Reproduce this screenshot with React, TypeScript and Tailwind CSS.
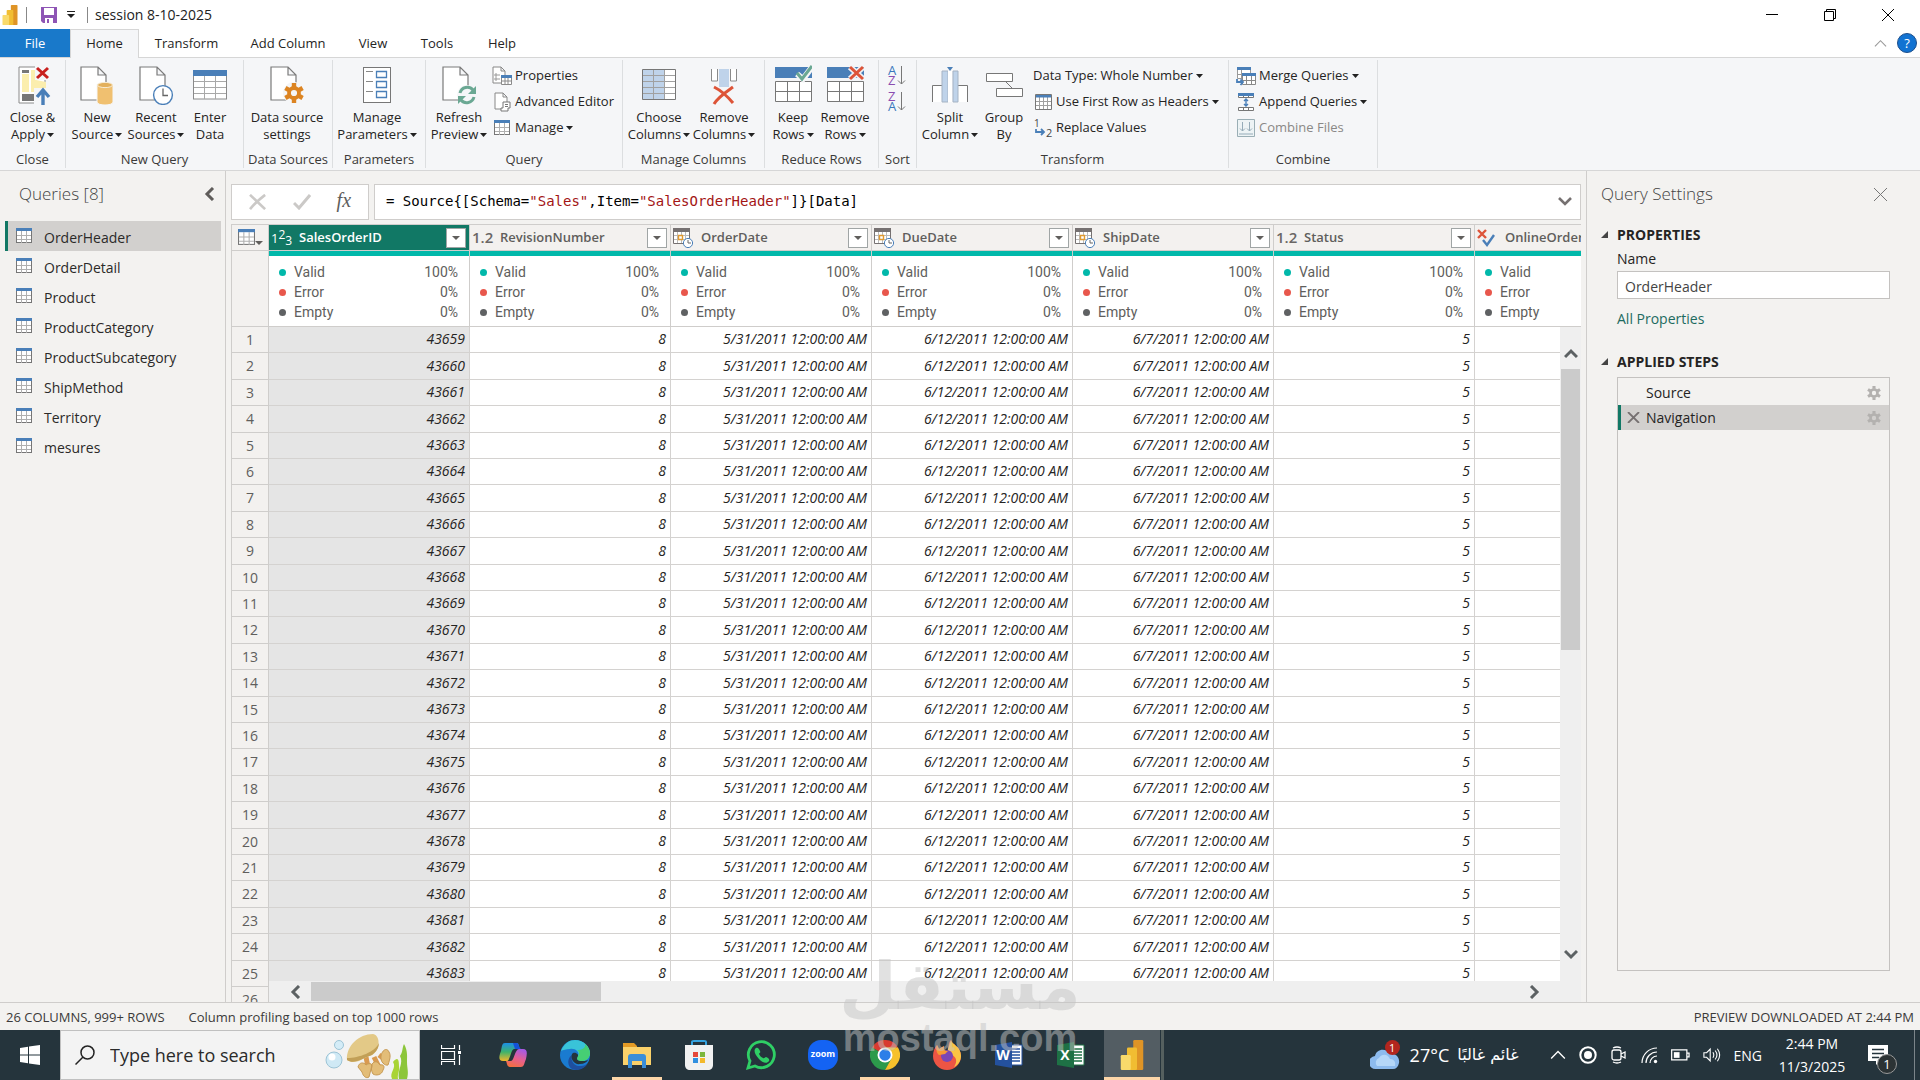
import { useState } from "react";
import type { ReactNode } from "react";

const queries = [
  "OrderHeader",
  "OrderDetail",
  "Product",
  "ProductCategory",
  "ProductSubcategory",
  "ShipMethod",
  "Territory",
  "mesures",
];

const columns = [
  { name: "SalesOrderID", type: "int" },
  { name: "RevisionNumber", type: "decimal" },
  { name: "OrderDate", type: "date" },
  { name: "DueDate", type: "date" },
  { name: "ShipDate", type: "date" },
  { name: "Status", type: "decimal" },
  { name: "OnlineOrderFlag", type: "bool" },
];

const rows = Array.from({ length: 26 }, (_, i) => [
  String(43659 + i),
  "8",
  "5/31/2011 12:00:00 AM",
  "6/12/2011 12:00:00 AM",
  "6/7/2011 12:00:00 AM",
  "5",
  "",
]);

/* ---------- icons ---------- */

const Caret = () => (
  <svg width="7" height="4" viewBox="0 0 7 4" className="inline-block shrink-0">
    <path d="M0 0h7L3.5 4z" fill="#222" />
  </svg>
);

const Page = () => (
  <path d="M2 2h17l8 8v25H2zM19 2v8h8" fill="#fff" stroke="#7a7a7a" strokeWidth="1.2" />
);

const TableIcon = ({ size = 16 }: { size?: number }) => (
  <svg width={size} height={size} viewBox="0 0 16 16" className="shrink-0">
    <rect x="0.5" y="0.5" width="15" height="14" fill="#fff" stroke="#767676" />
    <path d="M5.5 3v12M10.5 3v12M1 7.5h14M1 11.5h14" stroke="#b0b0b0" fill="none" />
    <path d="M0 0h16v3H0z" fill="#4a7fb8" />
  </svg>
);

const Gear = ({ fill }: { fill: string }) => (
  <g fill="none" stroke={fill}>
    <circle cx="10" cy="10" r="5" strokeWidth="3.8" />
    <g strokeWidth="4.4">
      <path d="M10 0v4M10 16v4M1.4 5l3.4 2M15.2 13l3.4 2M1.4 15l3.4-2M15.2 7l3.4-2" />
    </g>
  </g>
);

const CloseApplyIcon = () => (
  <svg width="36" height="40" viewBox="0 0 36 40">
    <path d="M4 2h26v36H4z" fill="#fff" stroke="#8a8a8a" />
    <path d="M7 9h7v18H7zM16 5h5v10l10 2v10H16z" fill="#fbeeae" />
    <path d="M7 5h7v3H7zM7 29h13v7H7z" fill="#777" />
    <path d="M20 0h16v15H20zM19 23h17v17H19z" fill="#f5f6f8" />
    <path d="M22 3l11 10M33 3L22 13" stroke="#c8201e" strokeWidth="3" />
    <path d="M28 40V26M22 32l6-7 6 7" stroke="#4a7fb8" strokeWidth="3.4" fill="none" />
  </svg>
);

const NewSourceIcon = () => (
  <svg width="36" height="40" viewBox="0 0 36 40">
    <Page />
    <path d="M18 19v18c0 4 16 4 16 0V19z" fill="#f0c070" stroke="#f5f6f8" />
    <ellipse cx="26" cy="20" rx="7.5" ry="2.6" fill="#e3b05c" stroke="#f8ecd4" />
  </svg>
);

const RecentIcon = () => (
  <svg width="36" height="40" viewBox="0 0 36 40">
    <Page />
    <circle cx="25" cy="30" r="9.4" fill="#fff" stroke="#4a7fb8" strokeWidth="1.4" />
    <path d="M25 23.500v7h5" stroke="#666" fill="none" strokeWidth="1.3" />
  </svg>
);

const EnterDataIcon = () => (
  <svg width="36" height="40" viewBox="0 0 36 40">
    <rect x="1.500" y="6" width="33" height="28" fill="#fff" stroke="#8a8a8a" />
    <path d="M12.500 10v24M23.500 10v24M2 16.500h32M2 22.500h32M2 28.500h32" stroke="#a8a8a8" />
    <path d="M1 5h34v6H1z" fill="#4a7fb8" />
  </svg>
);

const DataSettingsIcon = () => (
  <svg width="36" height="40" viewBox="0 0 36 40">
    <Page />
    <circle cx="25" cy="28" r="11" fill="#f5f6f8" />
    <g transform="translate(15 18)">
      <Gear fill="#dc8422" />
    </g>
  </svg>
);

const ParamsIcon = () => (
  <svg width="36" height="40" viewBox="0 0 36 40">
    <rect x="4.500" y="2.500" width="27" height="35" fill="#fff" stroke="#777" />
    <path d="M7 6.500h7M7 16.500h7M7 26.500h7" stroke="#888" />
    <path d="M17.500 6.500h10v6h-10zM17.500 16.500h10v6h-10zM17.500 26.500h10v6h-10z" fill="#fff" stroke="#4a7fb8" strokeWidth="1.3" />
  </svg>
);

const RefreshIcon = () => (
  <svg width="36" height="40" viewBox="0 0 36 40">
    <Page />
    <circle cx="26" cy="30" r="10" fill="#f5f6f8" />
    <path d="M19 28a7.500 7.500 0 0 1 13-3M33 32a7.500 7.500 0 0 1-13 3" fill="none" stroke="#6aa893" strokeWidth="3" />
    <path d="M35 21v8h-8zM17 39v-8h8z" fill="#6aa893" />
  </svg>
);

const ChooseColumnsIcon = () => (
  <svg width="36" height="40" viewBox="0 0 36 40">
    <path d="M1.500 4.500h33v30h-33z" fill="#fff" />
    <path d="M1.500 4.500h22v30h-22z" fill="#bfd3ea" />
    <path d="M12.500 5v29M23.500 5v29M2 10.500h32M2 16.500h32M2 22.500h32M2 28.500h32" stroke="#a0a0a0" />
    <path d="M1.500 4.500h33v30h-33z" fill="none" stroke="#777" />
  </svg>
);

const RemoveColumnsIcon = () => (
  <svg width="36" height="40" viewBox="0 0 36 40">
    <path d="M5.500 4v12h6V4M24.500 4v12h6V4" fill="#fff" stroke="#8a8a8a" />
    <path d="M13 4h10v18H13z" fill="#bfd3ea" />
    <path d="M8 22c6 3 14 10 19 16M27 22C20 27 12 32 8 39" stroke="#dd5438" strokeWidth="3" fill="none" />
  </svg>
);

const RowsIcon = ({ keep }: { keep: boolean }) => (
  <svg width="38" height="40" viewBox="0 0 38 40">
    <path d="M1 2h37v11H1z" fill="#4a7fb8" />
    <path d="M1.500 16.500h36v20h-36zM13.500 17v20M25.500 17v20M2 26.500h36" fill="#fff" stroke="#777" />
    {keep ? (
      <>
        <path d="M23 9l6 5L38 2" stroke="#f5f6f8" strokeWidth="6" fill="none" />
        <path d="M23 8l5 6L38 1" stroke="#6aa893" strokeWidth="3" fill="none" />
      </>
    ) : (
      <>
        <path d="M24 2l13 12M37 2L24 14" stroke="#f0f2f5" strokeWidth="6" />
        <path d="M24 2l13 12M37 2L24 14" stroke="#dd5438" strokeWidth="3" />
      </>
    )}
  </svg>
);

const SplitIcon = () => (
  <svg width="38" height="40" viewBox="0 0 38 40">
    <path d="M1.500 37V20.500h11V37M25.500 37V20.500h11V37" fill="#fff" stroke="#777" />
    <path d="M11 6h6v31h-6zM22 6h5v31h-5z" fill="#bfd3ea" stroke="#a5b3c4" />
    <path d="M17 6h4v31h-4z" fill="#fff" />
    <path d="M16 2h6l-3 4z" fill="#4a7fb8" />
  </svg>
);

const GroupByIcon = () => (
  <svg width="38" height="40" viewBox="0 0 38 40">
    <path d="M20 16l8 8" stroke="#777" />
    <path d="M1.500 8.500h26v8h-26zM11.500 23.500h26v8h-26z" fill="#fff" stroke="#777" />
  </svg>
);

const SortIcon = ({ a, b }: { a: string; b: string }) => (
  <svg width="20" height="22" viewBox="0 0 20 22" className="overflow-visible">
    <text x="0" y="10" fontSize="13" fontFamily="Open Sans, sans-serif" fill={a === "A" ? "#3a78bd" : "#8a4cb0"}>{a}</text>
    <text x="0" y="20" fontSize="13" fontFamily="Open Sans, sans-serif" fill={b === "A" ? "#3a78bd" : "#8a4cb0"}>{b}</text>
    <path d="M13.500 1v18M10 15.500l3.500 3.500 3.500-3.500" stroke="#777" fill="none" />
  </svg>
);

const PropertiesIcon = () => (
  <svg width="20" height="20" viewBox="0 0 20 20">
    <path d="M1 1h8l4 4v12H1zM9 1v4h4" fill="#fff" stroke="#888" />
    <path d="M3 8h2v2H3zM3 12h2v2H3zM6 9h2M6 13h2" stroke="#999" fill="none" />
    <path d="M9.500 9.500h10v9h-10zM13 12v6M16 12v6M10 15h9" fill="#fff" stroke="#8a8a8a" />
    <path d="M9 9h11v3H9z" fill="#4a7fb8" />
  </svg>
);

const EditorIcon = () => (
  <svg width="20" height="20" viewBox="0 0 20 20">
    <path d="M3 1h8l4 4v12H3zM11 1v4h4" fill="#fff" stroke="#888" />
    <path d="M11 10h7v6h-2v3H9v-3h2z" fill="#fff" stroke="#777" />
    <path d="M13 12.500h3M13 14.500h3" stroke="#777" />
  </svg>
);

const HeadersIcon = () => (
  <svg width="17" height="16" viewBox="0 0 17 16">
    <path d="M.5 .5h16v15H.5z" fill="#fff" />
    <path d="M4.500 1v14M8.500 1v14M12.500 1v14M1 7.500h15M1 11.500h15" stroke="#a0a0a0" />
    <path d="M1 1h15v2.500H1z" fill="#4a7fb8" />
    <path d="M.5 .5h16v15H.5z" fill="none" stroke="#777" />
  </svg>
);

const ReplaceIcon = () => (
  <svg width="19" height="20" viewBox="0 0 19 20" className="overflow-visible">
    <text x="0" y="9" fontSize="10" fontFamily="Open Sans, sans-serif" fill="#444">1</text>
    <text x="12" y="19" fontSize="11" fontFamily="Open Sans, sans-serif" fill="#444">2</text>
    <path d="M2 11v3h7M7 11l3 3-3 3" stroke="#4a7fb8" strokeWidth="1.800" fill="none" />
  </svg>
);

const MergeIcon = () => (
  <svg width="20" height="20" viewBox="0 0 20 20">
    <path d="M1.500 1.500h13v11h-13zM5.500 3v10M2 8.500h8" fill="#fff" stroke="#999" />
    <path d="M1 1h14v3H1z" fill="#4a7fb8" />
    <path d="M6.500 7.500h13v11h-13zM10.500 9v10M15.500 9v10M7 14.500h12" fill="#fff" stroke="#888" />
    <path d="M6 7h14v3H6z" fill="#4a7fb8" />
    <path d="M1 13v3h5M4.500 13.500L7 16l-2.500 3" stroke="#4a7fb8" strokeWidth="1.800" fill="none" />
  </svg>
);

const AppendIcon = () => (
  <svg width="20" height="20" viewBox="0 0 20 20">
    <path d="M2.500 3.500h15v2h-15zM7.500 3v3M12.500 3v3M2.500 15.500h15v3h-15zM7.500 15v3M12.500 15v3" fill="#fff" stroke="#777" />
    <path d="M2 1h16v3H2z" fill="#4a7fb8" />
    <path d="M10 7v7M8 9l2-2 2 2M8 12l2 2 2-2" stroke="#4a7fb8" fill="none" strokeWidth="1.400" />
  </svg>
);

const CombineIcon = () => (
  <svg width="20" height="20" viewBox="0 0 20 20">
    <path d="M1.500 1.500h17v17h-17z" fill="#edf3f5" stroke="#9aaeb5" />
    <path d="M6.500 4v9M4 10.500L6.500 13 9 10.500M13.500 4v9M11 10.500l2.500 2.500 2.500-2.500M3 16h14" stroke="#95abb8" fill="none" />
  </svg>
);

const PowerBi = ({ size }: { size: number }) => (
  <svg width={size} height={size} viewBox="0 0 24 24" className="shrink-0">
    <rect x="13" y="0" width="8" height="24" rx="1" fill="#df9426" />
    <rect x="8" y="6" width="8" height="18" rx="1" fill="#f1bd32" />
    <rect x="3" y="12" width="8" height="12" rx="1" fill="#f9da6b" />
  </svg>
);

const Chevron = ({ d, size = 14, color = "#5f5c5a", w = 3 }: { d: string; size?: number; color?: string; w?: number }) => (
  <svg width={size} height={size} viewBox="0 0 14 14" className="shrink-0">
    <path d={d} stroke={color} strokeWidth={w} fill="none" />
  </svg>
);

const UP = "M1 10l6-6 6 6";
const DOWN = "M1 4l6 6 6-6";
const LEFT = "M10 1L4 7l6 6";
const RIGHT = "M4 1l6 6-6 6";

const TypeIcon = ({ type }: { type: string }) => {
  if (type === "int") {
    return (
      <span className="flex text-[13px] leading-4 font-normal text-white">
        1<sup className="top-[-3px] text-[12px] leading-4">2</sup>
        <sub className="bottom-[-3px] text-[12px] leading-4">3</sub>
      </span>
    );
  }
  if (type === "decimal") {
    return <span className="text-[15px] font-semibold text-[#6a6765]">1.2</span>;
  }
  if (type === "date") {
    return (
      <svg width="20" height="22" viewBox="0 0 20 22">
        <path d="M.5 1.500h16v15H.5z" fill="#fff" stroke="#767171" />
        <path d="M4.500 4v12M8.500 4v12M12.500 4v12M1 8.500h15M1 12.500h15" stroke="#bbb" />
        <path d="M0 1h17v4H0z" fill="#767171" />
        <path d="M5.500 8.500h4v4h-4z" fill="#fff" stroke="#e09a30" strokeWidth="1.400" />
        <circle cx="15" cy="16" r="4.600" fill="#fff" stroke="#4a7fb8" />
        <path d="M15 13v3h3" stroke="#666" fill="none" />
      </svg>
    );
  }
  return (
    <svg width="18" height="20" viewBox="0 0 18 20">
      <path d="M1 2l8 8M9 2L1 10" stroke="#dd5438" strokeWidth="2.400" />
      <path d="M6 12l4 5 7-10" stroke="#4a7fb8" strokeWidth="2.400" fill="none" />
    </svg>
  );
};

/* ---------- ribbon ---------- */

const Big = ({ icon, lines, caret, width }: { icon: ReactNode; lines: [string, string]; caret?: boolean; width: string }) => (
  <button className={"flex flex-col items-center whitespace-nowrap text-[13px] leading-[17px] " + width}>
    {icon}
    <span className="mt-1">{lines[0]}</span>
    <span className="flex items-center gap-[2px]">
      {lines[1]}
      {caret && <Caret />}
    </span>
  </button>
);

const Small = ({ icon, label, caret, disabled }: { icon?: ReactNode; label: string; caret?: boolean; disabled?: boolean }) => (
  <button disabled={disabled} className="flex h-[26px] items-center gap-[3px] whitespace-nowrap text-[13px] disabled:text-[#8a8886]">
    {icon && <span className="flex w-5 justify-center">{icon}</span>}
    {label}
    {caret && <Caret />}
  </button>
);

const Group = ({ label, width, children }: { label: string; width: string; children: ReactNode }) => (
  <div className={"flex h-[108px] shrink-0 flex-col border-r border-[#dcdee0] " + width}>
    <div className="flex flex-1">{children}</div>
    <div className="h-[18px] text-center text-[13px] leading-[18px] whitespace-nowrap text-[#3b3a39]">{label}</div>
  </div>
);

const Ribbon = () => (
  <div className="flex h-[113px] border-b border-[#d6d6d6] bg-[#f5f6f8] pt-[2px]">
    <Group label="Close" width="w-[66px]">
      <div className="flex pt-[5px]">
        <Big icon={<CloseApplyIcon />} lines={["Close &", "Apply"]} caret width="w-[65px]" />
      </div>
    </Group>
    <Group label="New Query" width="w-[178px]">
      <div className="flex pt-[5px]">
        <Big icon={<NewSourceIcon />} lines={["New", "Source"]} caret width="w-[62px]" />
        <Big icon={<RecentIcon />} lines={["Recent", "Sources"]} caret width="w-14" />
        <Big icon={<EnterDataIcon />} lines={["Enter", "Data"]} width="w-[52px]" />
      </div>
    </Group>
    <Group label="Data Sources" width="w-[89px]">
      <div className="flex pt-[5px]">
        <Big icon={<DataSettingsIcon />} lines={["Data source", "settings"]} width="w-[86px]" />
      </div>
    </Group>
    <Group label="Parameters" width="w-[93px]">
      <div className="flex pt-[5px]">
        <Big icon={<ParamsIcon />} lines={["Manage", "Parameters"]} caret width="w-[88px]" />
      </div>
    </Group>
    <Group label="Query" width="w-[197px]">
      <div className="flex pt-[5px]">
        <Big icon={<RefreshIcon />} lines={["Refresh", "Preview"]} caret width="w-[66px]" />
      </div>
      <div className="flex flex-col items-start pt-[3px]">
        <Small icon={<PropertiesIcon />} label="Properties" />
        <Small icon={<EditorIcon />} label="Advanced Editor" />
        <Small icon={<TableIcon />} label="Manage" caret />
      </div>
    </Group>
    <Group label="Manage Columns" width="w-[142px]">
      <div className="flex pt-[5px] pl-[3px]">
        <Big icon={<ChooseColumnsIcon />} lines={["Choose", "Columns"]} caret width="w-[66px]" />
        <Big icon={<RemoveColumnsIcon />} lines={["Remove", "Columns"]} caret width="w-16" />
      </div>
    </Group>
    <Group label="Reduce Rows" width="w-[114px]">
      <div className="flex pt-[5px] pl-[2px]">
        <Big icon={<RowsIcon keep />} lines={["Keep", "Rows"]} caret width="w-[52px]" />
        <Big icon={<RowsIcon keep={false} />} lines={["Remove", "Rows"]} caret width="w-[52px]" />
      </div>
    </Group>
    <Group label="Sort" width="w-[38px]">
      <div className="flex flex-col gap-1 pt-[5px] pl-[9px]">
        <button aria-label="Sort ascending"><SortIcon a="A" b="Z" /></button>
        <button aria-label="Sort descending"><SortIcon a="Z" b="A" /></button>
      </div>
    </Group>
    <Group label="Transform" width="w-[312px]">
      <div className="flex pt-[5px] pl-[2px]">
        <Big icon={<SplitIcon />} lines={["Split", "Column"]} caret width="w-[62px]" />
        <Big icon={<GroupByIcon />} lines={["Group", "By"]} width="w-[46px]" />
      </div>
      <div className="flex flex-col items-start pt-[3px] pl-[6px]">
        <Small label="Data Type: Whole Number" caret />
        <Small icon={<HeadersIcon />} label="Use First Row as Headers" caret />
        <Small icon={<ReplaceIcon />} label="Replace Values" />
      </div>
    </Group>
    <Group label="Combine" width="w-[149px]">
      <div className="flex flex-col items-start pt-[3px] pl-[7px]">
        <Small icon={<MergeIcon />} label="Merge Queries" caret />
        <Small icon={<AppendIcon />} label="Append Queries" caret />
        <Small icon={<CombineIcon />} label="Combine Files" disabled />
      </div>
    </Group>
  </div>
);

const TitleBar = () => (
  <div className="flex h-[29px] items-center pr-[26px]">
    <PowerBi size={20} />
    <span className="ml-[6px] h-4 w-px bg-[#888]" />
    <button aria-label="Save" className="ml-[14px]">
      <svg width="16" height="16" viewBox="0 0 16 16">
        <path d="M0 0h16v16H2l-2-2z" fill="#8e55b5" />
        <path d="M3 1h10v7H3zM4 11h8v5H4z" fill="#fff" />
        <path d="M6 12h2v4H6z" fill="#8e55b5" />
      </svg>
    </button>
    <button aria-label="Customize toolbar" className="ml-[10px]">
      <svg width="8" height="7" viewBox="0 0 8 7">
        <path d="M0 0h8v1H0zM0 3h8L4 7z" fill="#222" />
      </svg>
    </button>
    <span className="ml-3 h-4 w-px bg-[#888]" />
    <h1 className="ml-[7px] text-[14px] text-[#222]">session 8-10-2025</h1>
    <div className="ml-auto flex items-center gap-[46px]">
      <button aria-label="Minimize">
        <svg width="12" height="12" viewBox="0 0 12 12"><path d="M0 5.500h12" stroke="#000" /></svg>
      </button>
      <button aria-label="Restore">
        <svg width="12" height="12" viewBox="0 0 12 12"><path d="M.5 2.500h9v9h-9zM2.500 2V.5h9v9H10" stroke="#000" fill="none" /></svg>
      </button>
      <button aria-label="Close">
        <svg width="12" height="12" viewBox="0 0 12 12"><path d="M0 0l12 12M12 0L0 12" stroke="#000" /></svg>
      </button>
    </div>
  </div>
);

const Tabs = () => (
  <div className="flex h-[29px] border-b border-[#d6d6d6] text-[13px]">
    <button className="h-7 w-[70px] bg-[#1979ca] pt-[2px] text-white">File</button>
    <button className="h-[29px] w-[69px] border border-b-0 border-[#d6d6d6] bg-[#f5f6f8]">Home</button>
    <button className="w-[95px] pt-[2px]">Transform</button>
    <button className="w-[108px] pt-[2px]">Add Column</button>
    <button className="w-[62px] pt-[2px]">View</button>
    <button className="w-[66px] pt-[2px]">Tools</button>
    <button className="w-16 pt-[2px]">Help</button>
    <div className="ml-auto flex items-center gap-[10px] pr-[3px]">
      <button aria-label="Collapse ribbon"><Chevron d={UP} size={13} color="#999" w={1.2} /></button>
      <button aria-label="Help" className="h-5 w-5 rounded-full border border-[#1d4f8c] bg-[#1273d2] text-[13px] leading-[18px] text-white">?</button>
    </div>
  </div>
);

/* ---------- body ---------- */

const QueriesPanel = ({ active, onSelect }: { active: string; onSelect: (q: string) => void }) => (
  <aside className="w-[226px] shrink-0 border-r border-[#cfcdcb]">
    <div className="flex h-[50px] items-center justify-between pr-2 pb-1 pl-[19px]">
      <h2 className="text-[17px] font-light text-[#444]">Queries [8]</h2>
      <button aria-label="Collapse queries"><Chevron d={LEFT} /></button>
    </div>
    <ul className="pr-1 pl-[5px]">
      {queries.map((q) => (
        <li key={q}>
          <button
            onClick={() => onSelect(q)}
            className={
              "flex h-[30px] w-full items-center gap-3 border-l-[3px] pl-2 text-[14px] text-[#2b2a29] " +
              (q === active ? "border-[#117865] bg-[#d2d0ce]" : "border-transparent")
            }
          >
            <TableIcon />
            <span className="pt-[2px]">{q}</span>
          </button>
        </li>
      ))}
    </ul>
  </aside>
);

const Stat = ({ dot, label, value }: { dot: string; label: string; value: string }) => (
  <div className="flex h-5 items-center pr-[11px] pl-[10px] font-['Roboto',sans-serif] text-[14px] font-normal text-[#605e5c]">
    <span className={"mr-2 h-[7px] w-[7px] rounded-full " + dot} />
    {label}
    <span className="ml-auto">{value}</span>
  </div>
);

const DataGrid = () => (
  <div className="relative min-h-0 flex-1 overflow-hidden border-t border-l border-[#cfcdcb]">
    <table className="w-[1444px] table-fixed border-separate border-spacing-0">
      <colgroup>
        <col className="w-[37px]" />
        {columns.map((c) => (
          <col key={c.name} className="w-[201px]" />
        ))}
      </colgroup>
      <thead>
        <tr className="h-[26px]">
          <th className="border-r border-b border-[#cfcdcb] bg-[#f3f1ef] p-0">
            <button aria-label="Table menu" className="flex items-end pl-[6px]">
              <TableIcon size={17} />
              <svg width="8" height="5" viewBox="0 0 8 5"><path d="M0 0h8L4 4z" fill="#605e5c" /></svg>
            </button>
          </th>
          {columns.map((c, i) => (
            <th
              key={c.name}
              className={
                "overflow-hidden border-r border-b border-[#cfcdcb] p-0 " +
                (i === 0 ? "bg-[#117865] text-white" : "bg-[#f3f1ef] text-[#605e5c]")
              }
            >
              <div className="flex h-[25px] items-center pr-[3px] pl-[2px]">
                <span className="flex w-7 shrink-0">
                  <TypeIcon type={c.type} />
                </span>
                <span className="text-[13px] font-semibold">{c.name}</span>
                <button aria-label={"Filter " + c.name} className="ml-auto flex h-5 w-5 shrink-0 items-center justify-center border border-[#a0a5a5] bg-white">
                  <svg width="8" height="4" viewBox="0 0 8 4"><path d="M0 0h8L4 4z" fill="#605e5c" /></svg>
                </button>
              </div>
            </th>
          ))}
        </tr>
        <tr className="h-[76px]">
          <th className="border-r border-b border-[#cfcdcb] bg-[#f3f1ef] p-0" />
          {columns.map((c) => (
            <th key={c.name} className="border-r border-b border-[#cfcdcb] bg-white p-0 align-top">
              <div className="h-[5px] bg-[#01b8aa]" />
              <div className="pt-[6px]">
                <Stat dot="bg-[#01b8aa]" label="Valid" value="100%" />
                <Stat dot="bg-[#e8574c]" label="Error" value="0%" />
                <Stat dot="bg-[#5f6163]" label="Empty" value="0%" />
              </div>
            </th>
          ))}
        </tr>
      </thead>
      <tbody>
        {rows.map((row, i) => (
          <tr key={row[0]} className={i % 5 === 1 || i % 5 === 3 ? "h-[27px]" : "h-[26px]"}>
            <th className="border-r border-b border-[#cfcdcb] bg-[#f3f1ef] p-0 text-[14px] leading-5 font-normal text-[#605e5c]">{i + 1}</th>
            {row.map((cell, j) => (
              <td
                key={j}
                className={
                  "border-r border-b border-[#d4d2d0] p-0 pr-1 pb-px text-right text-[14px] leading-5 whitespace-nowrap text-[#252423] italic " +
                  (j === 0 ? "bg-[#e5e5e5]" : "bg-white")
                }
              >
                {cell}
              </td>
            ))}
          </tr>
        ))}
      </tbody>
    </table>
    <div className="absolute top-[102px] right-0 bottom-[21px] flex w-[21px] flex-col items-center bg-[#efefef]">
      <button aria-label="Scroll up" className="pt-5 pb-2"><Chevron d={UP} color="#5c6163" /></button>
      <div className="h-[281px] w-[19px] bg-[#cbcbcb]" />
      <button aria-label="Scroll down" className="mt-auto pb-5"><Chevron d={DOWN} color="#5c6163" /></button>
    </div>
    <div className="absolute right-0 bottom-0 left-[37px] flex h-[21px] items-center bg-[#efefef]">
      <button aria-label="Scroll left" className="pr-2 pl-5"><Chevron d={LEFT} color="#5c6163" /></button>
      <div className="h-[19px] w-[290px] bg-[#cbcbcb]" />
      <button aria-label="Scroll right" className="mr-10 ml-auto"><Chevron d={RIGHT} color="#5c6163" /></button>
    </div>
  </div>
);

const FormulaBar = () => (
  <div className="flex h-9 shrink-0 gap-[5px]">
    <div className="flex w-[138px] items-center justify-around border border-[#cfcdcb] bg-white px-1">
      <button aria-label="Cancel formula">
        <svg width="18" height="16" viewBox="0 0 20 18"><path d="M1 1l17 16M18 1C10 7 6 11 1 17" stroke="#cbc9c7" strokeWidth="3" fill="none" /></svg>
      </button>
      <button aria-label="Accept formula">
        <svg width="18" height="16" viewBox="0 0 18 16"><path d="M1 9l5 5L17 1" stroke="#cbc9c7" strokeWidth="3" fill="none" /></svg>
      </button>
      <button className="pb-1 font-['Liberation_Serif',serif] text-[20px] leading-5 text-[#605e5c] italic">fx</button>
    </div>
    <div className="flex min-w-0 flex-1 items-center justify-between border border-[#cfcdcb] bg-white pr-2 pb-[2px] pl-[11px]">
      <code className="font-['DejaVu_Sans_Mono',monospace] text-[14px] whitespace-pre text-black">
        = Source&#123;[Schema=<span className="text-[#a31515]">"Sales"</span>,Item=<span className="text-[#a31515]">"SalesOrderHeader"</span>]&#125;[Data]
      </code>
      <button aria-label="Expand formula bar"><Chevron d={DOWN} color="#767171" w={2.6} /></button>
    </div>
  </div>
);

const steps = ["Source", "Navigation"];

const SettingsPanel = ({ name }: { name: string }) => {
  const [step, setStep] = useState("Navigation");

  return (
    <aside className="flex w-[334px] shrink-0 flex-col border-l border-[#cfcdcb] pr-[30px] pb-[31px] pl-[14px]">
      <div className="flex h-[46px] shrink-0 items-center justify-between pr-[2px]">
        <h2 className="text-[17px] font-light text-[#444]">Query Settings</h2>
        <button aria-label="Close settings">
          <svg width="15" height="15" viewBox="0 0 15 15"><path d="M1 1l13 13M14 1L1 14" stroke="#777" /></svg>
        </button>
      </div>
      <h3 className="mt-[7px] flex h-5 items-center gap-[9px] text-[14px] font-bold text-[#252423]">
        <svg width="7" height="7" viewBox="0 0 7 7"><path d="M7 0v7H0z" fill="#444" /></svg>
        PROPERTIES
      </h3>
      <div className="flex flex-col items-start pl-4 text-[14px]">
        <label htmlFor="query-name" className="mt-[5px] leading-5">Name</label>
        <input id="query-name" key={name} defaultValue={name} className="mt-[2px] h-7 w-full border border-[#c4c2c0] bg-white px-[7px] pt-[2px] text-[14px] text-[#444]" />
        <a href="#" className="mt-[10px] leading-5 text-[#1d6b5f]">All Properties</a>
      </div>
      <h3 className="mt-[22px] flex h-5 items-center gap-[9px] text-[14px] font-bold text-[#252423]">
        <svg width="7" height="7" viewBox="0 0 7 7"><path d="M7 0v7H0z" fill="#444" /></svg>
        APPLIED STEPS
      </h3>
      <ul className="mt-[6px] ml-4 flex-1 border border-[#c4c2c0] pt-[2px]">
        {steps.map((s) => (
          <li
            key={s}
            className={"flex h-[25px] items-center border-l-[3px] pr-2 pl-[6px] " + (s === step ? "border-[#117865] bg-[#d2d0ce]" : "border-transparent")}
          >
            <span className="flex w-[19px]">
              {s === step && (
                <button aria-label={"Delete " + s}>
                  <svg width="13" height="11" viewBox="0 0 13 11"><path d="M1 0l11 11M12 0L1 11" stroke="#767171" strokeWidth="1.800" /></svg>
                </button>
              )}
            </span>
            <button onClick={() => setStep(s)} className="flex-1 text-left text-[14px] text-[#252423]">{s}</button>
            <button aria-label={"Settings for " + s}>
              <svg width="14" height="14" viewBox="0 0 20 20"><Gear fill="#b3b1af" /></svg>
            </button>
          </li>
        ))}
      </ul>
    </aside>
  );
};

/* ---------- taskbar ---------- */

const SearchArt = () => (
  <svg width="86" height="48" viewBox="0 0 86 48" className="shrink-0">
    <circle cx="10" cy="29" r="8" fill="#cfe9f5" stroke="#9dc4d6" />
    <circle cx="8" cy="26" r="3.500" fill="#fff" />
    <circle cx="15" cy="14" r="4.500" fill="#d4ecf7" stroke="#9dc4d6" />
    <path d="M42 26l2 10M50 26l5 10M55 24l8 6" stroke="#d99a50" strokeWidth="5" />
    <path d="M34 36c1-5 6-5 8-2 4-3 8-1 5 4l-2 8c-3 2-6-1-7-5zM48 33c3-4 6-2 8 1 4-1 5 2 3 5-1 5-7 6-10 4-2-3-2-7-1-10zM57 25c1-6 6-9 8-4 2 3 1 7-1 13-3 1-8-3-7-9z" fill="#e3bd78" stroke="#c79a54" />
    <path d="M23 29C22 15 35 3 49 3c9 2 6 18-1 21-8 2-16 11-25 5z" fill="#e3c987" />
    <path d="M23 29c7 5 16-2 25-5 4-3 7-7 7-12-4 9-20 15-32 15z" fill="#c2a057" />
    <path d="M68 48c-3-7 5-11 1-17 5-6 6-2 6 4 1 5-2 8-1 13z" fill="#a9d435" />
    <path d="M75 48c-2-9 5-16 1-23 3-4 2-8 4-12 4 7 3 13 3 18 0 6 2 10 0 17z" fill="#8cc63a" />
  </svg>
);

const CopilotIcon = () => (
  <svg width="28" height="26" viewBox="0 0 28 26">
    <defs>
      <linearGradient id="cop-a" x1="0" y1="0" x2="0" y2="1">
        <stop offset="0" stopColor="#1b8fe8" />
        <stop offset="0.500" stopColor="#3fb36b" />
        <stop offset="1" stopColor="#f4b62a" />
      </linearGradient>
      <linearGradient id="cop-b" x1="0.600" y1="0" x2="0.200" y2="1">
        <stop offset="0" stopColor="#a95ae0" />
        <stop offset="0.500" stopColor="#e8608c" />
        <stop offset="1" stopColor="#f5703a" />
      </linearGradient>
    </defs>
    <path d="M6 1h12c2 0 2 5 3 6h-6c-3 0-4 12-7 12H4c-5 0-4-5-2-10C3 4 3 1 6 1z" fill="url(#cop-a)" />
    <path d="M14 1h4c2 0 2 5 4 6h-6z" fill="#1552d8" />
    <path d="M22 25H11c-3 0-3-4-4-6h5c3 0 4-12 8-12h4c5 0 4 5 3 10-2 5-2 8-5 8z" fill="url(#cop-b)" />
  </svg>
);

const EdgeIcon = () => (
  <svg width="30" height="30" viewBox="0 0 30 30">
    <circle cx="15" cy="15" r="15" fill="#1a7bd0" />
    <path d="M1 11C4 3 10 0 15 0c9 0 15 7 15 13 0 5-4 8-8 8-5 0-6-2-4-5 2-4-3-8-8-7-4 0-7 1-9 2z" fill="#39c3d8" />
    <path d="M25 4c4 3 5 7 5 9 0 5-4 8-8 8-5 0-6-2-4-5 2-2 1-5-1-6 5 0 9-2 8-6z" fill="#46cf74" />
    <path d="M12 15c-2 6 3 12 9 11 3 0 5-1 7-3-4 7-11 8-16 6-5-3-5-11 0-14z" fill="#1e4f9e" />
    <path d="M12 14c-2 6 3 11 8 10 4 0 7-2 8-4-2 1-4 1-6 1-5 0-6-2-4-5 1-2-4-5-6-2z" fill="#25343c" />
  </svg>
);

const ExplorerIcon = () => (
  <svg width="28" height="26" viewBox="0 0 28 26">
    <path d="M0 1h11l3 3v4H0z" fill="#e39a25" />
    <path d="M0 5h28v18H0z" fill="#fad16a" />
    <path d="M5 26V15c0-2 1-3 3-3h12c2 0 3 1 3 3v11h-4v-7H9v7z" fill="#3a8ed8" />
  </svg>
);

const StoreIcon = () => (
  <svg width="30" height="30" viewBox="0 0 30 30">
    <path d="M8 5V2c0-1 1-1 2-1h10c1 0 2 0 2 1v3" stroke="#35a3e0" strokeWidth="2" fill="none" />
    <path d="M1 5h28v20c0 3-2 5-5 5H6c-3 0-5-2-5-5z" fill="#f1f1f1" />
    <path d="M9 12h5v5H9z" fill="#e5483a" />
    <path d="M16 12h5v5h-5z" fill="#7bb63c" />
    <path d="M9 18h5v5H9z" fill="#2f8fe0" />
    <path d="M16 18h5v5h-5z" fill="#f3b92c" />
  </svg>
);

const WhatsAppIcon = () => (
  <svg width="32" height="32" viewBox="0 0 32 32">
    <path d="M3 29l2-7A13 13 0 1 1 10 27z" fill="#25343c" stroke="#2fcf65" strokeWidth="2.800" />
    <path d="M11 9c-3 2-1 7 3 11s8 5 10 2c1-2-1-3-3-4-1 0-2 2-3 1-2-1-3-2-4-4 0-1 2-1 1-3s-2-4-4-3z" fill="#2fcf65" />
  </svg>
);

const ChromeIcon = () => (
  <svg width="30" height="30" viewBox="0 0 30 30">
    <path d="M15 15L2 7.500A15 15 0 0 1 28 7.500z" fill="#d93a2f" />
    <path d="M15 15L2 7.500A15 15 0 0 0 15 30l6.500-11z" fill="#2c9a4b" />
    <path d="M15 15l6.500 3.500L15 30A15 15 0 0 0 28 7.500H15z" fill="#f6c12c" />
    <circle cx="15" cy="15" r="7.500" fill="#fff" />
    <circle cx="15" cy="15" r="5.700" fill="#2c7fe8" />
  </svg>
);

const FirefoxIcon = () => (
  <svg width="30" height="30" viewBox="0 0 30 30">
    <path d="M1 16c0-5 2-9 4-11l2 4 5-3c-1 4 1 5 4 5 1-5 0-8 3-11 1 5 10 6 10 16a14 14 0 0 1-28 0z" fill="#ee5544" />
    <path d="M19 0c1 5 10 6 10 16 0 5-3 9-7 11 4-6 2-10-2-12-5-1-5-3-4-6z" fill="#fac445" />
    <circle cx="15" cy="16" r="6" fill="#7b47b4" />
    <path d="M5 5l2 4 5-3c-1 4 1 5 4 5l-3 3-6 1c-3-2-3-7-2-10z" fill="#f79a34" />
  </svg>
);

const OfficeIcon = ({ letter, color }: { letter: string; color: string }) => (
  <svg width="28" height="26" viewBox="0 0 28 26">
    <path d="M15 3h12v20H15z" fill="#fff" stroke={color} />
    <path d="M17 7h8M17 10h8M17 13h8M17 16h8M17 19h8" stroke={color} strokeWidth="1.400" />
    <path d="M0 3l17-3v26L0 23z" fill={color} />
    <text x="8" y="18" fontSize="14" fontWeight="700" textAnchor="middle" fontFamily="Open Sans, sans-serif" fill="#fff">{letter}</text>
  </svg>
);

const apps = [
  {
    name: "Task View",
    icon: (
      <svg width="20" height="20" viewBox="0 0 20 20" fill="none" stroke="#fff">
        <path d="M.5 0v3.500h13V0M.5 20v-3.500h13V20M.5 6.500h13v8H.5zM18.500 0v5M18.500 10v10" strokeWidth="1.200" />
        <path d="M17 6h3v3h-3z" fill="#fff" stroke="none" />
      </svg>
    ),
  },
  { name: "Copilot", icon: <CopilotIcon /> },
  { name: "Edge", icon: <EdgeIcon /> },
  { name: "File Explorer", icon: <ExplorerIcon />, open: true },
  { name: "Store", icon: <StoreIcon /> },
  { name: "WhatsApp", icon: <WhatsAppIcon /> },
  {
    name: "Zoom",
    icon: (
      <span className="flex h-[30px] w-[30px] items-center justify-center rounded-[13px] bg-[#1463f3] pb-[2px] text-[9px] font-bold text-white">
        zoom
      </span>
    ),
  },
  { name: "Chrome", icon: <ChromeIcon />, open: true },
  { name: "Firefox", icon: <FirefoxIcon /> },
  { name: "Word", icon: <OfficeIcon letter="W" color="#24519e" /> },
  { name: "Excel", icon: <OfficeIcon letter="X" color="#1e7145" /> },
];

const Taskbar = () => (
  <footer className="flex h-[50px] shrink-0 items-center bg-[#25343c] text-white">
    <button aria-label="Start" className="flex h-full w-[60px] items-center justify-center">
      <svg width="20" height="20" viewBox="0 0 20 20" fill="#fff">
        <path d="M0 3l8-1.200V9.500H0zM9 1.600L20 0v9.500H9zM0 10.500h8v7.700L0 17zM9 10.500h11V20L9 18.400z" />
      </svg>
    </button>
    <label className="flex h-full w-[360px] items-center border border-[#c0c0c0] bg-[#f3f3f3] pr-[9px] pl-[14px] text-[#2a2a2a]">
      <svg width="20" height="20" viewBox="0 0 20 20" fill="none" stroke="#222" strokeWidth="1.500">
        <circle cx="12.500" cy="7.500" r="6.500" />
        <path d="M8 12l-7.500 7.500" />
      </svg>
      <input type="search" placeholder="Type here to search" className="ml-[15px] min-w-0 flex-1 bg-transparent text-[18px] placeholder:text-[#2a2a2a]" />
      <SearchArt />
    </label>
    {apps.map((a) => (
      <button key={a.name} aria-label={a.name} className="relative flex h-full w-[62px] items-center justify-center">
        {a.icon}
        {a.open && <span className="absolute inset-x-[6px] bottom-0 h-[3px] bg-[#fdd6a8]" />}
      </button>
    ))}
    <button aria-label="Power BI Desktop" className="relative ml-[2px] flex h-full w-14 items-center justify-center bg-[#535d63]">
      <PowerBi size={30} />
      <span className="absolute inset-x-0 bottom-0 h-[3px] bg-[#fdd6a8]" />
    </button>
    <span className="h-full w-1 border-l border-[#25343c] bg-[#55605f]" />

    <div className="ml-auto flex h-full items-center">
      <button className="flex items-center text-[18px]">
        <span className="relative mr-[10px]">
          <svg width="30" height="30" viewBox="0 0 30 30">
            <path d="M6 29a6.500 6.500 0 0 1-1-13C6 9 16 7 20 14c5-1 10 3 9 9-1 4-3 6-6 6z" fill="#8dbbee" />
            <path d="M7 26a5 5 0 0 1 2-8c3-5 9-4 11 1 4 0 6 3 5 7z" fill="#b5d7f8" />
          </svg>
          <span className="absolute top-0 right-0 h-[15px] w-[15px] rounded-full bg-[#b3261e] text-center text-[11px] leading-[15px]">1</span>
        </span>
        27°C
        <span dir="rtl" className="ml-2 font-['DejaVu_Sans',sans-serif] text-[16px]">غائم غالبًا</span>
      </button>
      <div className="ml-[31px] flex items-center gap-[13px]">
        <Chevron d={UP} size={16} color="#fff" w={1.2} />
        <svg width="18" height="18" viewBox="0 0 18 18">
          <circle cx="9" cy="9" r="7.700" fill="none" stroke="#fff" strokeWidth="2" />
          <circle cx="9" cy="9" r="4" fill="#fff" />
        </svg>
        <svg width="18" height="18" viewBox="0 0 16 18" fill="none" stroke="#fff" strokeWidth="1.300">
          <rect x="1" y="4" width="9" height="10" rx="2" />
          <path d="M10 8l4-2v6l-4-2M2 2q4-2 8 0M2 16q4 2 8 0" />
        </svg>
        <svg width="17" height="18" viewBox="0 0 17 18" fill="none" stroke="#fff">
          <path d="M1 17A15 15 0 0 1 16 2M5 17A11 11 0 0 1 16 6M9 17a7 7 0 0 1 7-7" strokeWidth="1.200" />
          <circle cx="14.500" cy="15.500" r="1.700" fill="#fff" stroke="none" />
        </svg>
        <svg width="19" height="12" viewBox="0 0 20 12">
          <path d="M.7 .7h16v10.500H.7zM17 4h2v4h-2" fill="none" stroke="#fff" strokeWidth="1.300" />
          <path d="M3 3h6v6H3z" fill="#fff" />
        </svg>
        <svg width="18" height="18" viewBox="0 0 20 18" fill="none" stroke="#fff" strokeWidth="1.200">
          <path d="M1 6.500h3l4-4v13l-4-4H1zM11 6q2 3 0 6M13.500 4q4 5 0 10M16 2q5 7 0 14" />
        </svg>
        <span className="text-[14px]">ENG</span>
      </div>
      <time className="ml-[15px] w-[70px] text-center text-[14px] leading-[23px] whitespace-nowrap">
        2:44 PM
        <br />
        11/3/2025
      </time>
      <button aria-label="Notifications" className="relative mr-[26px] ml-[21px]">
        <svg width="20" height="20" viewBox="0 0 20 20">
          <path d="M0 0h20v16h-8l-4 4v-4H0z" fill="#fff" />
          <path d="M4 4.500h12M4 8.500h12M4 12.500h7" stroke="#25343c" strokeWidth="1.300" />
        </svg>
        <span className="absolute top-[9px] left-[9px] h-5 w-5 rounded-full border border-[#999] bg-[#2c3335] text-center text-[13px] leading-[18px]">1</span>
      </button>
      <span className="mr-[5px] h-full w-px bg-[#7b8489]" />
    </div>
  </footer>
);

const Watermark = () => (
  <div className="pointer-events-none absolute bottom-6 left-[845px] flex w-[230px] flex-col items-center text-[#c4c4c4]/50">
    <span dir="rtl" className="font-['DejaVu_Sans',sans-serif] text-[66px] leading-[66px] font-bold whitespace-nowrap">مستقل</span>
    <span className="font-['Liberation_Sans',sans-serif] text-[38px] leading-9 font-bold">mostaql.com</span>
  </div>
);

export default function App() {
  const [active, setActive] = useState("OrderHeader");

  return (
    <div className="relative flex h-screen flex-col overflow-hidden bg-white font-['Open_Sans',sans-serif] text-[#252423]">
      <header className="shrink-0">
        <TitleBar />
        <Tabs />
        <Ribbon />
      </header>
      <div className="flex min-h-0 flex-1 bg-[#f3f2f0]">
        <QueriesPanel active={active} onSelect={setActive} />
        <main className="flex min-w-0 flex-1 flex-col gap-1 pt-[13px] pr-[5px] pl-[5px]">
          <FormulaBar />
          <DataGrid />
        </main>
        <SettingsPanel name={active} />
      </div>
      <div className="flex h-7 shrink-0 items-center gap-6 border-t border-[#cfcdcb] bg-[#f3f2f0] px-[6px] pt-[2px] text-[13px] text-[#3b3a39]">
        <span>26 COLUMNS, 999+ ROWS</span>
        <span>Column profiling based on top 1000 rows</span>
        <span className="ml-auto">PREVIEW DOWNLOADED AT 2:44 PM</span>
      </div>
      <Taskbar />
      <Watermark />
    </div>
  );
}
